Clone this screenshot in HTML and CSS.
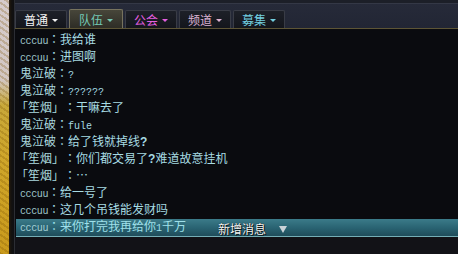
FILE: index.html
```html
<!DOCTYPE html>
<html lang="zh">
<head>
<meta charset="utf-8">
<link rel="stylesheet" href="styles.css">
</head>
<body>
<div class="screen">
  <div class="map"></div>
  <div class="frame"></div>
  <div class="panel">
    <div class="topband"></div>
    <div class="tabs">
      <div class="tab t-normal">普通<span class="arr"></span></div>
      <div class="tab t-team active">队伍<span class="arr"></span></div>
      <div class="tab t-guild">公会<span class="arr"></span></div>
      <div class="tab t-channel">频道<span class="arr"></span></div>
      <div class="tab t-recruit">募集<span class="arr"></span></div>
    </div>
    <div class="chat">
      <div class="line"><span class="en">cccuu</span><span class="c">：</span>我给谁</div>
      <div class="line"><span class="en">cccuu</span><span class="c">：</span>进图啊</div>
      <div class="line"><span class="nm">鬼泣破</span><span class="c">：</span><span class="en">?</span></div>
      <div class="line"><span class="nm">鬼泣破</span><span class="c">：</span><span class="en">??????</span></div>
      <div class="line br"><span class="nm">「笙烟」</span><span class="c">：</span>干嘛去了</div>
      <div class="line"><span class="nm">鬼泣破</span><span class="c">：</span><span class="en">fule</span></div>
      <div class="line"><span class="nm">鬼泣破</span><span class="c">：</span>给了钱就掉线<b class="q">?</b></div>
      <div class="line br"><span class="nm">「笙烟」</span><span class="c">：</span>你们都交易了<b class="q">?</b>难道故意挂机</div>
      <div class="line br"><span class="nm">「笙烟」</span><span class="c">：</span>…</div>
      <div class="line"><span class="en">cccuu</span><span class="c">：</span>给一号了</div>
      <div class="line"><span class="en">cccuu</span><span class="c">：</span>这几个吊钱能发财吗</div>
      <div class="line hl"><span class="en">cccuu</span><span class="c">：</span>来你打完我再给你<span class="en">1</span>千万</div>
    </div>
    <div class="foot"></div>
  </div>
  <div class="notice">新增消息<span class="down"></span></div>
</div>
</body>
</html>
```
FILE: styles.css
```css
html, body {
  margin: 0;
  padding: 0;
  background: #0b0c10;
}
.screen {
  position: relative;
  width: 458px;
  height: 254px;
  overflow: hidden;
  display: flex;
  font-family: "Noto Sans CJK SC", "Noto Sans", sans-serif;
}
.map {
  width: 9px;
  flex: none;
  background:
    repeating-linear-gradient(35deg, rgba(120,80,0,0.25) 0 2px, transparent 2px 5px),
    linear-gradient(180deg, #d6cccc 0, #d2c6c2 80px, #c8a83a 105px, #cfa62a 160px, #c99a1c 254px);
}
.frame {
  width: 5px;
  flex: none;
  background: linear-gradient(90deg, #2a1e10 0, #15120e 2px, #101012 4px);
  border-right: 1px solid #2b2d33;
}
.panel {
  flex: 1;
  display: flex;
  flex-direction: column;
  min-width: 0;
}
.topband {
  height: 3px;
  background: #1c1f28;
  border-bottom: 1px solid #343846;
  flex: none;
}
.tabs {
  height: 24px;
  flex: none;
  display: flex;
  align-items: flex-end;
  gap: 2px;
  background: linear-gradient(180deg, #262a39, #222634);
  border-bottom: 1px solid #5d5535;
}
.tab {
  width: 52px;
  height: 18px;
  box-sizing: border-box;
  display: flex;
  align-items: center;
  justify-content: center;
  gap: 4px;
  font-size: 12px;
  line-height: 14px;
  padding-top: 1px;
  background: linear-gradient(180deg, #1d2028, #14161c);
  border: 1px solid #393c46;
  border-bottom: none;
  border-radius: 2px 2px 0 0;
}
.tab.active {
  width: 54px;
  height: 19px;
  background: linear-gradient(180deg, #47463a, #2e2d26);
  border-color: #77735e;
}
.arr {
  width: 0;
  height: 0;
  border-left: 3px solid transparent;
  border-right: 3px solid transparent;
  border-top: 3px solid currentColor;
  margin-top: 1px;
}
.t-normal { color: #f4f4f4; }
.t-team { color: #74c9b4; }
.t-guild { color: #e45fe0; }
.t-channel { color: #dcb2d2; }
.t-recruit { color: #72cfe0; }
.chat {
  flex: none;
  padding: 1px 0 0 1px;
  background: #0a0b0f;
  color: #a7dbe3;
  font-size: 12px;
}
.line {
  height: 17px;
  line-height: 17px;
  padding-left: 4px;
  white-space: nowrap;
}
.line.br {
  padding-left: 0;
}
.en {
  font-family: "Liberation Mono", "DejaVu Sans Mono", monospace;
  font-size: 10px;
}
.line > .en:first-child { color: #9fc6cb; letter-spacing: -0.4px; }
.nm { color: #abd9df; }
.c {
  display: inline-block;
  width: 12px;
  text-align: center;
  font-family: "Noto Sans CJK TC", sans-serif;
}
.q {
  font-family: "Liberation Sans", sans-serif;
  font-weight: bold;
}
.line.hl {
  margin-top: 2px;
  height: 18px;
  line-height: 13px;
  box-sizing: border-box;
  padding-left: 4px;
  background: linear-gradient(180deg, #3b7b89 0, #2a6473 50%, #1f4c5a 100%);
  border-bottom: 1px solid #74aeb6;
  color: #9fe0ea;
}
.line.hl > .en:first-child { color: #a3d0d6; }
.foot {
  flex: 1;
  background: #121217;
}
.notice {
  position: absolute;
  left: 218px;
  top: 222px;
  display: flex;
  align-items: center;
  gap: 13px;
  font-size: 12px;
  line-height: 14px;
  color: #f6f6f6;
  text-shadow: 0 0 1px #000, 1px 1px 0 #0a1a20;
}
.down {
  width: 0;
  height: 0;
  border-left: 4px solid transparent;
  border-right: 4px solid transparent;
  border-top: 7px solid #c9d2d8;
}
```
